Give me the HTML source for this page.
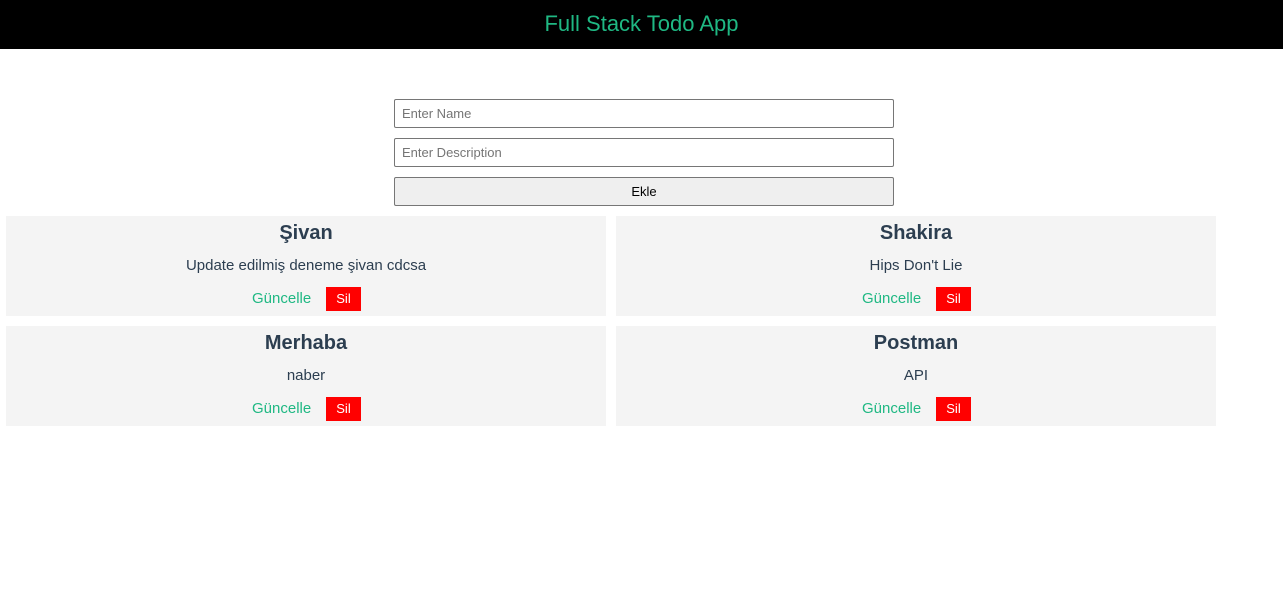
<!DOCTYPE html>
<html><head><meta charset="utf-8"><style>
*{box-sizing:border-box;margin:0;padding:0}
body{width:1283px;height:591px;background:#fff;font-family:"Liberation Sans",sans-serif;position:relative;overflow:hidden}
.hdr{height:49px;background:#000;color:#1fb883;font-size:22px;text-align:center;line-height:48px}
.in{position:absolute;left:394px;width:500px;height:29px;border:1px solid #767676;border-radius:2px;font-size:13px;color:#757575;padding-left:7px;line-height:27px}
.btn{position:absolute;left:394px;top:177px;width:500px;height:29px;border:1px solid #767676;border-radius:2px;background:#efefef;font-size:13px;text-align:center;line-height:27px;color:#000}
.card{position:absolute;width:600px;height:100px;background:#f4f4f4;text-align:center;color:#2c3e50}
.card h3{position:absolute;top:5px;left:0;right:0;font-size:20px;font-weight:bold;line-height:24px}
.card p{position:absolute;top:41px;left:0;right:0;font-size:15px;line-height:18px}
.g{position:absolute;top:74px;font-size:15px;color:#1fb883;line-height:18px}
.s{position:absolute;top:71px;width:35px;height:24px;background:#f00;color:#fff;font-size:13px;line-height:24px;text-align:center}
</style></head><body>
<div class="hdr">Full Stack Todo App</div>
<div class="in" style="top:99px">Enter Name</div>
<div class="in" style="top:138px">Enter Description</div>
<div class="btn">Ekle</div>
<div class="card" style="left:6px;top:216px"><h3>Şivan</h3><p>Update edilmiş deneme şivan cdcsa</p><span class="g" style="left:246px">Güncelle</span><span class="s" style="left:320px">Sil</span></div>
<div class="card" style="left:616px;top:216px"><h3>Shakira</h3><p>Hips Don't Lie</p><span class="g" style="left:246px">Güncelle</span><span class="s" style="left:320px">Sil</span></div>
<div class="card" style="left:6px;top:326px"><h3>Merhaba</h3><p>naber</p><span class="g" style="left:246px">Güncelle</span><span class="s" style="left:320px">Sil</span></div>
<div class="card" style="left:616px;top:326px"><h3>Postman</h3><p>API</p><span class="g" style="left:246px">Güncelle</span><span class="s" style="left:320px">Sil</span></div>
</body></html>
